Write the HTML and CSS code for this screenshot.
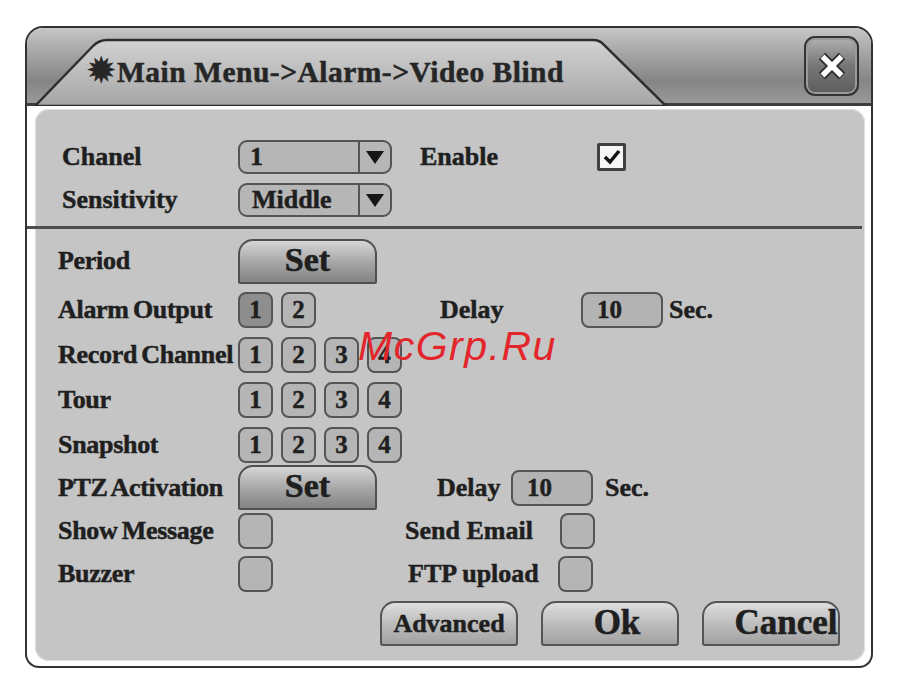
FILE: index.html
```html
<!DOCTYPE html>
<html lang="en">
<head>
    <meta charset="UTF-8">
    <title>Video Blind</title>
    <link rel="stylesheet" href="styles.css">
</head>
<body>
    <div class="window">
        <div class="titlebar">
            <svg class="tab" width="844" height="78" viewBox="0 0 844 78">
                <defs>
                    <linearGradient id="tabfill" x1="0" y1="0" x2="0" y2="1">
                        <stop offset="0" stop-color="#d2d2d2"/>
                        <stop offset="1" stop-color="#a6a6a6"/>
                    </linearGradient>
                </defs>
                <path d="M8 78 L66 18 Q72 12 80 12 L566 12 Q573 12 577 17 L639 78 Z" fill="url(#tabfill)" stroke="#2e2e2e" stroke-width="2.5"/>
            </svg>
            <div class="title"><span class="gear">✹</span>Main Menu-&gt;Alarm-&gt;Video Blind</div>
            <button class="close">
                <svg width="30" height="30" viewBox="0 0 30 30">
                    <path d="M5 5 L25 25 M25 5 L5 25" stroke="#2a2a2a" stroke-width="9"/>
                    <path d="M5.5 5.5 L24.5 24.5 M24.5 5.5 L5.5 24.5" stroke="#fff" stroke-width="5.5"/>
                </svg>
            </button>
        </div>

        <div class="body">
            <div class="panel">
                <div class="top">
                    <div class="row">
                        <span class="label top-label">Chanel</span>
                        <div class="select"><span class="value">1</span><span class="drop"><i class="arrow"></i></span></div>
                        <span class="label enable">Enable</span>
                        <span class="check">
                            <svg width="20" height="18" viewBox="0 0 20 18"><path d="M3 9 L8 14 L17 3" fill="none" stroke="#111" stroke-width="3.5"/></svg>
                        </span>
                    </div>
                    <div class="row">
                        <span class="label top-label">Sensitivity</span>
                        <div class="select"><span class="value mid">Middle</span><span class="drop"><i class="arrow"></i></span></div>
                    </div>
                </div>

                <div class="sep"></div>

                <div class="lower">
                    <div class="line h52">
                        <span class="label">Period</span>
                        <button class="set">Set</button>
                    </div>
                    <div class="line h46">
                        <span class="label">Alarm Output</span>
                        <div class="boxes">
                            <span class="box on">1</span>
                            <span class="box">2</span>
                        </div>
                        <span class="label delay-a">Delay</span>
                        <span class="field">10</span>
                        <span class="label sec">Sec.</span>
                    </div>
                    <div class="line h44">
                        <span class="label">Record Channel</span>
                        <div class="boxes">
                            <span class="box">1</span>
                            <span class="box">2</span>
                            <span class="box">3</span>
                            <span class="box">4</span>
                        </div>
                    </div>
                    <div class="line h46">
                        <span class="label">Tour</span>
                        <div class="boxes">
                            <span class="box">1</span>
                            <span class="box">2</span>
                            <span class="box">3</span>
                            <span class="box">4</span>
                        </div>
                    </div>
                    <div class="line">
                        <span class="label">Snapshot</span>
                        <div class="boxes">
                            <span class="box">1</span>
                            <span class="box">2</span>
                            <span class="box">3</span>
                            <span class="box">4</span>
                        </div>
                    </div>
                    <div class="line">
                        <span class="label">PTZ Activation</span>
                        <button class="set">Set</button>
                        <span class="label delay-b">Delay</span>
                        <span class="field">10</span>
                        <span class="label sec wide">Sec.</span>
                    </div>
                    <div class="line">
                        <span class="label">Show Message</span>
                        <span class="box"></span>
                        <span class="label email">Send Email</span>
                        <span class="box"></span>
                    </div>
                    <div class="line">
                        <span class="label">Buzzer</span>
                        <span class="box"></span>
                        <span class="label ftp">FTP upload</span>
                        <span class="box"></span>
                    </div>
                    <div class="actions">
                        <button class="btn small">Advanced</button>
                        <button class="btn ok">Ok</button>
                        <button class="btn cancel">Cancel</button>
                    </div>
                </div>
            </div>
        </div>

        <div class="watermark">McGrp.Ru</div>
    </div>
</body>
</html>
```

FILE: styles.css
```css
* {
    margin: 0;
    padding: 0;
    box-sizing: border-box;
}
body {
    background: #fff;
    font-family: "Liberation Serif", "DejaVu Serif", serif;
    font-weight: bold;
    color: #1f1f1f;
}
button {
    font-family: inherit;
    font-weight: bold;
    color: #1f1f1f;
    cursor: pointer;
}
.window {
    position: relative;
    width: 848px;
    height: 642px;
    margin: 26px 0 0 25px;
    border: 2px solid #333;
    border-radius: 18px 18px 14px 14px;
    background: #fff;
    overflow: hidden;
}

/* title bar */
.titlebar {
    position: relative;
    height: 78px;
    display: flex;
    align-items: center;
    justify-content: space-between;
    padding: 0 12px 0 60px;
    border-bottom: 3px solid #3c3c3c;
    background: linear-gradient(#c6c6c6 0%, #a4a4a4 35%, #858585 70%, #999 100%);
}
.tab {
    position: absolute;
    left: 0;
    top: 0;
}
.title {
    position: relative;
    margin-top: 10px;
    font-size: 29.5px;
    letter-spacing: 0.5px;
    color: #262626;
    white-space: nowrap;
    -webkit-text-stroke: 0.5px #262626;
}
.gear {
    font-family: "DejaVu Sans", sans-serif;
    font-size: 34px;
    line-height: 1;
    margin-right: 1px;
    -webkit-text-stroke: 0.8px #262626;
}
.close {
    position: relative;
    width: 55px;
    height: 60px;
    border: 2px solid #333;
    border-radius: 11px;
    background: linear-gradient(#b0b0b0, #767676 50%, #5c5c5c);
    box-shadow: inset 0 0 0 2px #9a9a9a;
    display: flex;
    align-items: center;
    justify-content: center;
}

/* body */
.body {
    height: 560px;
    padding: 3px 6px 5px 8px;
}
.panel {
    height: 552px;
    background: #c5c5c5;
    border-radius: 14px;
    box-shadow: inset 0 0 0 1px #e0e0e0;
}
.label {
    font-size: 26px;
    white-space: nowrap;
    -webkit-text-stroke: 0.5px #1f1f1f;
}

/* top section */
.top {
    height: 117px;
    padding: 30px 0 8px 27px;
    display: flex;
    flex-direction: column;
    gap: 7px;
}
.row {
    height: 36px;
    display: flex;
    align-items: center;
}
.top-label {
    width: 176px;
}
.select {
    width: 154px;
    height: 34px;
    display: flex;
    border: 2px solid #545454;
    border-radius: 9px;
    background: #b6b6b6;
}
.select .value {
    flex: 1;
    font-size: 26px;
    line-height: 30px;
    padding-left: 10px;
    -webkit-text-stroke: 0.5px #1f1f1f;
}
.select .value.mid {
    padding-left: 12px;
}
.drop {
    width: 32px;
    border-left: 2px solid #545454;
    display: flex;
    align-items: center;
    justify-content: center;
}
.arrow {
    border-left: 9px solid transparent;
    border-right: 9px solid transparent;
    border-top: 13px solid #151515;
}
.enable {
    width: 177px;
    margin-left: 28px;
}
.check {
    width: 29px;
    height: 28px;
    border: 3px solid #404040;
    border-radius: 2px;
    background: #f6f6f6;
    display: flex;
    align-items: center;
    justify-content: center;
}

.sep {
    height: 3px;
    margin: 0 3px 0 -8px;
    background: #4e4e4e;
}

/* lower section */
.lower {
    padding: 6px 25px 0 23px;
}
.line {
    height: 43px;
    display: flex;
    align-items: center;
}
.line.h52 { height: 52px; }
.line.h46 { height: 46px; }
.line.h44 { height: 44px; }
.line > .label:first-child {
    width: 180px;
    letter-spacing: -0.3px;
    word-spacing: -2px;
}
.set {
    width: 139px;
    height: 45px;
    font-size: 34px;
    border: 2px solid #505050;
    border-radius: 15px 15px 2px 2px;
    background: linear-gradient(#d6d6d6, #a8a8a8 50%, #838383);
    padding-bottom: 4px;
    -webkit-text-stroke: 0.6px #1f1f1f;
}
.boxes {
    display: flex;
    gap: 8px;
}
.box {
    width: 35px;
    height: 36px;
    border: 2px solid #555;
    border-radius: 8px;
    background: #b5b5b5;
    font-size: 25px;
    display: flex;
    align-items: center;
    justify-content: center;
    -webkit-text-stroke: 0.5px #1f1f1f;
}
.box.on {
    background: #8e8e8e;
}
.field {
    width: 82px;
    height: 36px;
    border: 2px solid #555;
    border-radius: 8px;
    background: #b3b3b3;
    font-size: 25px;
    line-height: 32px;
    padding-left: 14px;
    -webkit-text-stroke: 0.5px #1f1f1f;
}
.delay-a {
    width: 141px;
    margin-left: 124px;
}
.delay-b {
    width: 74px;
    margin-left: 60px;
}
.sec {
    margin-left: 6px;
}
.sec.wide {
    margin-left: 12px;
}
.email {
    width: 155px;
    margin-left: 132px;
}
.ftp {
    width: 150px;
    margin-left: 135px;
}
.actions {
    margin-top: 6px;
    display: flex;
    justify-content: flex-end;
    gap: 23px;
}
.btn {
    width: 138px;
    height: 45px;
    font-size: 35px;
    border: 2px solid #555;
    border-radius: 15px 15px 3px 3px;
    background: linear-gradient(#dedede, #bdbdbd 50%, #a2a2a2);
    padding-bottom: 4px;
    white-space: nowrap;
    -webkit-text-stroke: 0.6px #1f1f1f;
}
.btn.small {
    font-size: 26px;
    padding-bottom: 0;
    -webkit-text-stroke: 0.5px #1f1f1f;
}
.btn.ok {
    padding-left: 14px;
}
.btn.cancel {
    padding-left: 30px;
}

.watermark {
    position: absolute;
    left: 331px;
    top: 298px;
    font-family: "Liberation Sans", Arial, sans-serif;
    font-weight: normal;
    font-style: italic;
    font-size: 41px;
    letter-spacing: 1.5px;
    line-height: 1;
    color: #e2262c;
}
```
